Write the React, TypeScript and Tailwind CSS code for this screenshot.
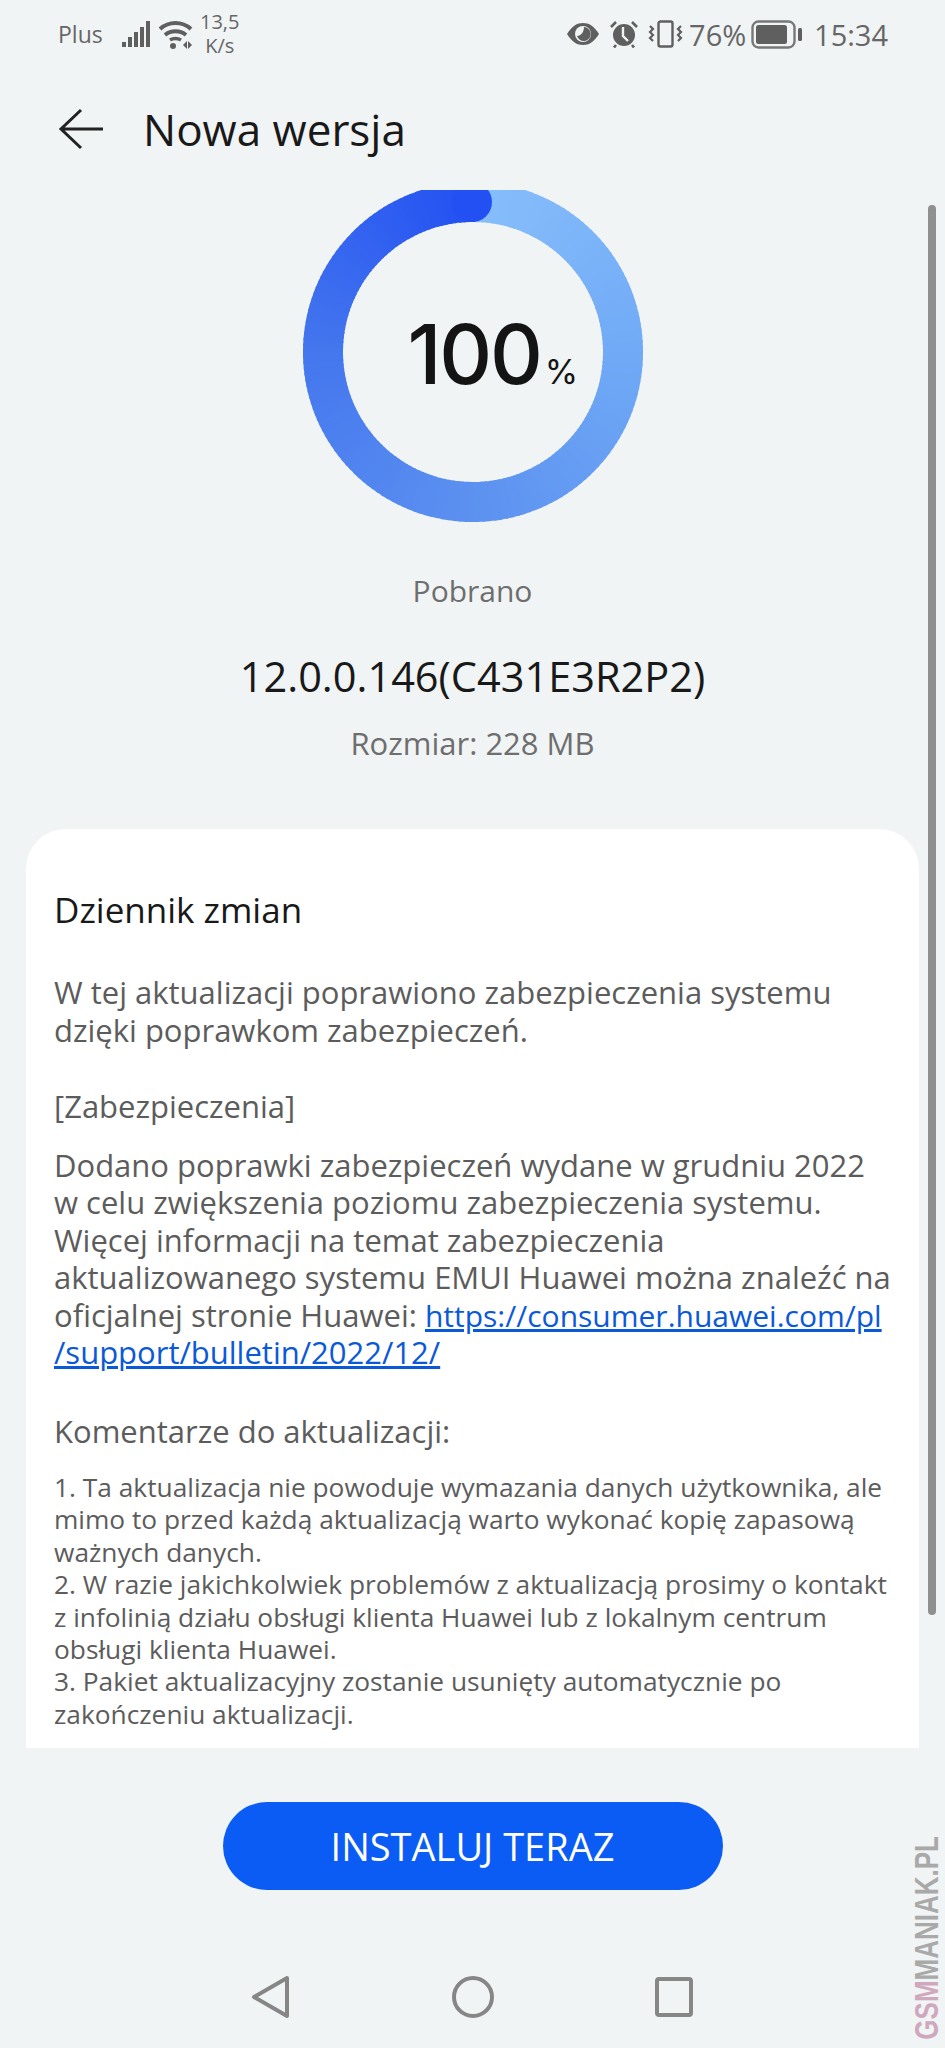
const FONT = "font-['Open_Sans','Noto_Sans',sans-serif]"

const CX = 172
const CY = 162
const R = 150

// colour stops around the ring, clockwise from 12 o'clock
const STOPS: [number, number[]][] = [
  [0, [135, 190, 251]],
  [0.25, [112, 170, 246]],
  [0.5, [92, 145, 240]],
  [0.75, [68, 118, 238]],
  [1, [34, 80, 242]],
]

function ringColor(t: number) {
  for (let i = 1; i < STOPS.length; i++) {
    if (t <= STOPS[i][0]) {
      const [a, ca] = STOPS[i - 1]
      const [b, cb] = STOPS[i]
      const k = (t - a) / (b - a)
      const c = ca.map((v, j) => Math.round(v + (cb[j] - v) * k))
      return `rgb(${c[0]},${c[1]},${c[2]})`
    }
  }
  return 'rgb(34,80,242)'
}

function point(t: number) {
  const a = t * Math.PI * 2
  return [CX + R * Math.sin(a), CY - R * Math.cos(a)]
}

function Ring() {
  const segs = Array.from({ length: 180 }, (_, i) => i)
  return (
    <div className="relative h-[336px] w-[344px] shrink-0">
      <svg width="344" height="336" viewBox="0 0 344 336" className="block">
        {segs.map((i) => {
          const [x1, y1] = point(i / 180)
          const [x2, y2] = point((i + 1.4) / 180)
          return (
            <path
              key={i}
              d={`M${x1} ${y1}A${R} ${R} 0 0 1 ${x2} ${y2}`}
              fill="none"
              stroke={ringColor(i / 180)}
              strokeWidth="40"
            />
          )
        })}
        <circle cx={CX - 1} cy={CY - R} r="20" fill="#2250f2" />
      </svg>
      <div className="absolute left-[107px] top-[120px] flex items-baseline font-['Inter',sans-serif] text-[#141414]">
        <span className="text-[82px] font-medium leading-[90px] tracking-[-2.2px]">100</span>
        <span className="ml-[4px] text-[34px] font-normal leading-none">%</span>
      </div>
    </div>
  )
}

function LeftStatus() {
  return (
    <div className="flex items-center">
      <span className="text-[23px] leading-none">Plus</span>
      <svg width="30" height="28" viewBox="0 0 30 28" className="ml-[18px]">
        <path d="M1 22h4v5H1zM7 17h4v10H7zM13 12h4v15h-4zM19 7h4v20h-4zM25 1h4v26h-4z" fill="#5f5f5f" />
      </svg>
      <svg width="35" height="29" viewBox="0 0 35 29" className="ml-[7px]">
        <path d="M2 9c9-8 22-8 31 0M7 15c6-5 15-5 21 0" fill="none" stroke="#5f5f5f" strokeWidth="4" />
        <path d="M12 20c3-2 8-2 11 0" fill="none" stroke="#5f5f5f" strokeWidth="3.4" />
        <circle cx="15" cy="26" r="3" fill="#5f5f5f" />
        <path d="M25 25l4-4v8zM34 25l-4-4v8z" fill="#5f5f5f" />
      </svg>
      <div className="ml-[8px] flex w-[38px] flex-col items-center text-[20px] leading-[24px]">
        <span>13,5</span>
        <span>K/s</span>
      </div>
    </div>
  )
}

function RightStatus() {
  return (
    <div className="flex items-center">
      {/* eye */}
      <svg width="34" height="24" viewBox="0 0 34 24">
        <path d="M1 12C6 4 11 1 17 1s11 3 16 11c-5 8-10 11-16 11S6 20 1 12z" fill="#5f5f5f" />
        <circle cx="17" cy="12" r="8" fill="#f1f4f5" />
        <path d="M18 5a7 7 0 1 1-7 9c3 0 7-3 7-9z" fill="#5f5f5f" />
      </svg>
      {/* alarm */}
      <svg width="30" height="28" viewBox="0 0 30 28" className="ml-[9px]">
        <circle cx="15" cy="15" r="11" fill="#5f5f5f" />
        <path d="M14 7v9l5 5" fill="none" stroke="#f1f4f5" strokeWidth="2.4" />
        <path d="M2 7l5-5M28 7l-5-5M7 25l-2 2.5M23 25l2 2.5" stroke="#5f5f5f" strokeWidth="2.6" />
      </svg>
      {/* vibrate */}
      <svg width="35" height="28" viewBox="0 0 35 28" className="ml-[9px]">
        <rect x="10.5" y="1.5" width="14" height="25" rx="2" fill="none" stroke="#5f5f5f" strokeWidth="2.4" />
        <path d="M2 6l3 3-3 3 3 3-3 3 3 3M33 6l-3 3 3 3-3 3 3 3-3 3" fill="none" stroke="#5f5f5f" strokeWidth="2.2" />
      </svg>
      <span className="ml-[6px] w-[56px] text-[29px] leading-none text-[#666]">76%</span>
      {/* battery */}
      <svg width="51" height="29" viewBox="0 0 51 29" className="ml-[6px]">
        <rect x="1.5" y="1.5" width="42" height="26" rx="6" fill="none" stroke="#777" strokeWidth="2.4" />
        <rect x="5" y="5" width="31" height="19" rx="2.5" fill="#5f5f5f" />
        <rect x="47" y="8" width="4" height="13" rx="1.5" fill="#5f5f5f" />
      </svg>
      <span className="ml-[12px] text-[29px] leading-none text-[#666]">15:34</span>
    </div>
  )
}

export default function App() {
  return (
    <div className={`${FONT} relative flex h-[2048px] w-[945px] flex-col overflow-hidden bg-[#f1f4f5]`}>
      {/* Status bar */}
      <div className="flex h-[68px] shrink-0 items-center justify-between pl-[58px] pr-[57px] text-[#666]">
        <LeftStatus />
        <RightStatus />
      </div>

      {/* Header */}
      <div className="flex h-[122px] shrink-0 items-center pl-[58px]">
        <svg width="46" height="42" viewBox="0 0 46 42" className="text-[#222]">
          <path d="M23 2L3 21l20 19M3 21h42" fill="none" stroke="currentColor" strokeWidth="3" />
        </svg>
        <h1 className="ml-[39px] text-[44px] font-medium leading-none text-[#191919]">Nowa wersja</h1>
      </div>

      {/* Scroll area */}
      <div className="relative flex flex-1 flex-col items-center">
        <Ring />
        <p className="mt-[44px] text-[30px] leading-[42px] text-[#6e6e6e]">Pobrano</p>
        <p className="mt-[39px] text-[41.5px] font-medium leading-[50px] text-[#191919]">12.0.0.146(C431E3R2P2)</p>
        <p className="mt-[21px] text-[31px] leading-[42px] text-[#6e6e6e]">Rozmiar: 228 MB</p>

        {/* Changelog card */}
        <div className="mt-[65px] h-[919px] w-[893px] shrink-0 overflow-hidden rounded-t-[40px] bg-white pl-[28px] pr-[14px] pt-[58px]">
          <h2 className="text-[35px] font-medium leading-[46px] text-[#191919]">Dziennik zmian</h2>
          <p className="mt-[41px] text-[31px] leading-[37.5px] text-[#5c5c5c]">
            W tej aktualizacji poprawiono zabezpieczenia systemu
            <br />
            dzięki poprawkom zabezpieczeń.
          </p>
          <p className="mt-[39px] text-[31px] leading-[37.5px] text-[#5c5c5c]">[Zabezpieczenia]</p>
          <p className="mt-[21px] text-[31px] leading-[37.5px] text-[#5c5c5c]">
            Dodano poprawki zabezpieczeń wydane w grudniu 2022
            <br />
            w celu zwiększenia poziomu zabezpieczenia systemu.
            <br />
            Więcej informacji na temat zabezpieczenia
            <br />
            aktualizowanego systemu EMUI Huawei można znaleźć na
            <br />
            oficjalnej stronie Huawei:{' '}
            <span className="text-[30px] text-[#0a59d8] underline">https://consumer.huawei.com/pl</span>
            <br />
            <span className="text-[#0a59d8] underline">/support/bulletin/2022/12/</span>
          </p>
          <p className="mt-[41px] text-[31px] font-medium leading-[37.5px] text-[#5c5c5c]">Komentarze do aktualizacji:</p>
          <p className="mt-[21px] text-[26.3px] leading-[32.4px] text-[#5c5c5c]">
            1. Ta aktualizacja nie powoduje wymazania danych użytkownika, ale
            <br />
            mimo to przed każdą aktualizacją warto wykonać kopię zapasową
            <br />
            ważnych danych.
            <br />
            2. W razie jakichkolwiek problemów z aktualizacją prosimy o kontakt
            <br />
            z infolinią działu obsługi klienta Huawei lub z lokalnym centrum
            <br />
            obsługi klienta Huawei.
            <br />
            3. Pakiet aktualizacyjny zostanie usunięty automatycznie po
            <br />
            zakończeniu aktualizacji.
          </p>
        </div>

        {/* Install button */}
        <button className="mt-[54px] h-[88px] w-[500px] shrink-0 rounded-full bg-[#0a5cf5] text-[38px] font-medium text-white">
          INSTALUJ TERAZ
        </button>

        {/* Nav bar */}
        <div className="mt-[84px] flex w-[447px] shrink-0 items-center justify-between">
          <svg width="44" height="46" viewBox="0 0 44 46">
            <path d="M38 4L5 23l33 19z" fill="none" stroke="#868686" strokeWidth="4" strokeLinejoin="round" />
          </svg>
          <svg width="44" height="46" viewBox="0 0 44 46">
            <circle cx="22" cy="23" r="19" fill="none" stroke="#868686" strokeWidth="4" />
          </svg>
          <svg width="44" height="46" viewBox="0 0 44 46">
            <rect x="5" y="5" width="34" height="36" rx="2" fill="none" stroke="#868686" strokeWidth="4" />
          </svg>
        </div>

        {/* Scrollbar */}
        <div className="absolute right-[9px] top-[15px] h-[1410px] w-[8px] rounded-full bg-[#8f8f8f]" />

        {/* Watermark */}
        <span className="absolute bottom-[8px] right-[6px] rotate-180 scale-x-125 font-['Liberation_Sans',sans-serif] text-[26px] font-bold leading-[24px] text-[#a9a9a9] [writing-mode:vertical-rl]">
          <span className="text-[#cfa8bd]">GSM</span>MANIAK.PL
        </span>
      </div>
    </div>
  )
}
